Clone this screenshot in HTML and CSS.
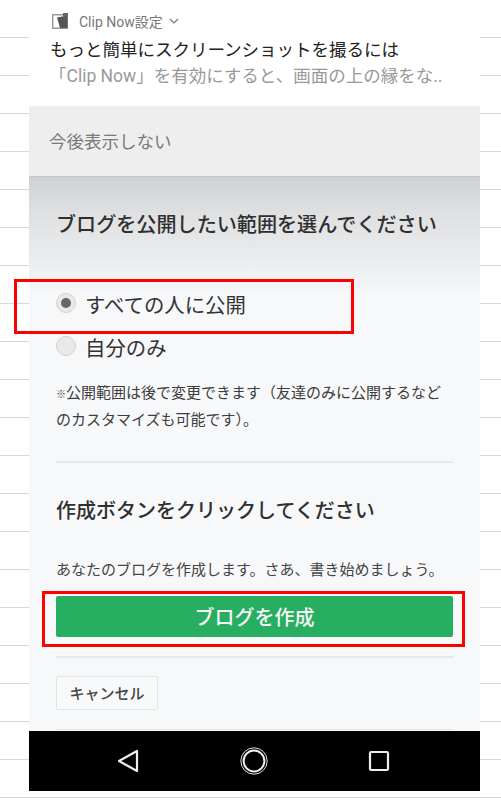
FILE: index.html
```html
<!DOCTYPE html>
<html lang="ja">
<head>
<meta charset="utf-8">
<title>ブログを作成</title>
<link rel="stylesheet" href="styles.css">
</head>
<body>
<div class="phone">
  <header class="notice">
    <div class="notice-app">
      <svg class="app-icon" width="18" height="18" viewBox="0 0 18 18">
        <path d="M2.7 2.7H17.3V16.3H2.7Z" fill="#fff" stroke="#999" stroke-width="1.4"/>
        <path d="M7 5.5L17.5 3.5V16H10Z" fill="#555"/>
        <path d="M13 1H18V4.5H13Z" fill="#666"/>
      </svg>
      <span class="app-name">Clip Now設定</span>
      <svg class="chev" width="10" height="6" viewBox="0 0 10 6"><path d="M1 1L5 5L9 1" fill="none" stroke="#777" stroke-width="1.2"/></svg>
    </div>
    <div class="notice-title">もっと簡単にスクリーンショットを撮るには</div>
    <div class="notice-body">「Clip Now」を有効にすると、画面の上の縁をな..</div>
  </header>
  <div class="dismiss">今後表示しない</div>
  <main class="content">
    <h2 class="title-a">ブログを公開したい範囲を選んでください</h2>
    <div class="option option-first"><span class="radio radio-on"></span><span>すべての人に公開</span></div>
    <div class="option"><span class="radio"></span><span>自分のみ</span></div>
    <p class="note"><span class="note-mark">※</span>公開範囲は後で変更できます（友達のみに公開するなど<br>のカスタマイズも可能です）。</p>
    <hr class="rule rule-a">
    <h2 class="title-b">作成ボタンをクリックしてください</h2>
    <p class="lead">あなたのブログを作成します。さあ、書き始めましょう。</p>
    <button class="create">ブログを作成</button>
    <hr class="rule rule-b">
    <button class="cancel">キャンセル</button>
    <hr class="rule rule-c">
  </main>
  <nav class="navbar">
    <svg width="24" height="26" viewBox="0 0 24 26"><path d="M21 3V23L3 13Z" fill="none" stroke="#eee" stroke-width="2.2" stroke-linejoin="round"/></svg>
    <svg width="30" height="30" viewBox="0 0 30 30"><circle cx="15" cy="15" r="13.2" fill="none" stroke="#ddd" stroke-width="1"/><circle cx="15" cy="15" r="10.4" fill="none" stroke="#f2f2f2" stroke-width="2"/></svg>
    <svg width="22" height="22" viewBox="0 0 22 22"><rect x="2" y="2" width="18" height="18" rx="1" fill="none" stroke="#eee" stroke-width="2.2"/></svg>
  </nav>
</div>
<div class="mark mark-a"></div>
<div class="mark mark-b"></div>
</body>
</html>
```
FILE: styles.css
```css
* { box-sizing: border-box; }
html, body { margin: 0; height: 100%; }
body {
  position: relative;
  overflow: hidden;
  background-color: #fff;
  background-image: repeating-linear-gradient(to bottom, #fff 0, #fff 37px, #d8d8d8 37px, #d8d8d8 38px);
  font-family: "Noto Sans CJK JP", "Noto Sans", sans-serif;
  color: #333;
}
.phone {
  width: 451px;
  height: 791px;
  margin-left: 29px;
  display: flex;
  flex-direction: column;
}
.notice {
  height: 106px;
  flex: none;
  background: #fff;
  padding: 11px 0 0 21px;
}
.notice-app { display: flex; align-items: center; height: 20px; }
.app-name {
  margin-left: 11px;
  font-family: "Roboto", "Noto Sans CJK JP", sans-serif;
  font-size: 14px;
  color: #777;
}
.chev { margin-left: 6px; }
.notice-title { margin-top: 5px; font-size: 17.5px; line-height: 25px; color: #222; white-space: nowrap; }
.notice-body { margin: 3px 0 0 -1px; font-family: "Roboto", "Noto Sans CJK JP", sans-serif; font-size: 17.5px; line-height: 25px; color: #999; white-space: nowrap; }
.dismiss {
  height: 71px;
  flex: none;
  background: #eee;
  padding-left: 20px;
  font-size: 17.5px;
  line-height: 70px;
  color: #7a7a7a;
  box-shadow: inset 0 -1px 0 #c4c4c4;
}
.content {
  flex: 1;
  min-height: 0;
  overflow: hidden;
  padding: 0 27px;
  background: linear-gradient(to bottom, #cfd0d1 0, #dfe0e1 36px, #e9eaeb 75px, #f7f8fa 120px);
}
.title-a, .title-b { margin: 0; font-weight: 500; color: #2f2f2f; }
.title-a { padding-top: 32px; font-size: 20.1px; line-height: 30px; }
.title-b { padding-top: 32px; font-size: 20px; line-height: 30px; }
.option { display: flex; align-items: center; gap: 9px; font-size: 20.4px; height: 43px; color: #333; }
.option-first { margin-top: 43px; }
.radio {
  width: 20px;
  height: 20px;
  border-radius: 50%;
  border: 1px solid #d3d3d3;
  background: #e9e9e9;
  display: flex;
  align-items: center;
  justify-content: center;
  position: relative;
  top: -1px;
}
.radio-on::after { content: ""; width: 10px; height: 10px; border-radius: 50%; background: #666; }
.note { margin: 10px 0 0; font-size: 15px; line-height: 27px; color: #3c3c3c; white-space: nowrap; }
.note-mark { font-size: 10px; line-height: 1; }
.rule { margin: 0; border: 0; height: 2px; background: #e7e8ea; }
.rule-a { margin-top: 29px; }
.lead { margin: 30px 0 0; font-size: 15px; line-height: 28px; color: #444; white-space: nowrap; }
.create {
  display: block;
  width: 100%;
  height: 41px;
  margin-top: 13px;
  border: 0;
  border-radius: 2px;
  background: #27ae60;
  color: #f4f4f4;
  font: 500 20px/41px "Noto Sans CJK JP", sans-serif;
  padding: 0;
}
.rule-b { margin-top: 19px; }
.cancel {
  display: block;
  margin-top: 18px;
  width: 102px;
  height: 34px;
  padding: 0;
  background: #f8f9fa;
  border: 1px solid #e3e3e3;
  border-radius: 2px;
  color: #444;
  font: 500 15px/32px "Noto Sans CJK JP", sans-serif;
}
.rule-c { margin-top: 19px; height: 1px; }
.navbar {
  height: 60px;
  flex: none;
  background: #000;
  display: flex;
  align-items: center;
  justify-content: space-between;
  padding: 0 90px 0 87px;
}
.mark { position: absolute; border: 3px solid #f00; }
.mark-a { left: 14px; top: 279px; width: 340px; height: 55px; }
.mark-b { left: 42px; top: 591px; width: 423px; height: 56px; }
```
